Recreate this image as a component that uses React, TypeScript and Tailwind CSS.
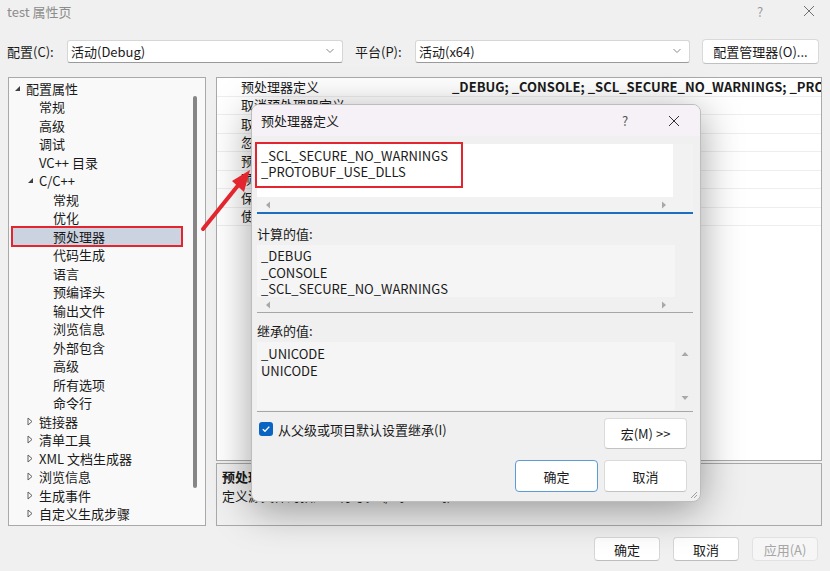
import React from "react";

type Node = { label: string; level: number; tri?: "open" | "closed"; selected?: boolean };

const tree: Node[] = [
  { label: "配置属性", level: 0, tri: "open" },
  { label: "常规", level: 1 },
  { label: "高级", level: 1 },
  { label: "调试", level: 1 },
  { label: "VC++ 目录", level: 1 },
  { label: "C/C++", level: 1, tri: "open" },
  { label: "常规", level: 2 },
  { label: "优化", level: 2 },
  { label: "预处理器", level: 2, selected: true },
  { label: "代码生成", level: 2 },
  { label: "语言", level: 2 },
  { label: "预编译头", level: 2 },
  { label: "输出文件", level: 2 },
  { label: "浏览信息", level: 2 },
  { label: "外部包含", level: 2 },
  { label: "高级", level: 2 },
  { label: "所有选项", level: 2 },
  { label: "命令行", level: 2 },
  { label: "链接器", level: 1, tri: "closed" },
  { label: "清单工具", level: 1, tri: "closed" },
  { label: "XML 文档生成器", level: 1, tri: "closed" },
  { label: "浏览信息", level: 1, tri: "closed" },
  { label: "生成事件", level: 1, tri: "closed" },
  { label: "自定义生成步骤", level: 1, tri: "closed" },
];

const props = [
  "预处理器定义",
  "取消预处理器定义",
  "取消所有预处理器定义",
  "忽略标准包含路径",
  "预处理到文件",
  "预处理取消显示行号",
  "保留注释",
  "使用标准符合性预处理器",
];

function Tri({ kind }: { kind?: "open" | "closed" }) {
  if (kind === "open")
    return (
      <svg width="7" height="7" viewBox="0 0 7 7">
        <path d="M6 1 L6 6 L1 6 Z" fill="#404040" />
      </svg>
    );
  if (kind === "closed")
    return (
      <svg width="6" height="9" viewBox="0 0 6 9">
        <path d="M1 1 L5 4.5 L1 8 Z" fill="none" stroke="#606060" strokeWidth="1" />
      </svg>
    );
  return null;
}

function Chevron() {
  return (
    <svg width="10" height="6" viewBox="0 0 10 6">
      <path d="M1.5 1 L5 4.5 L8.5 1" fill="none" stroke="#8a8a8a" strokeWidth="1" />
    </svg>
  );
}

function ArrowL() {
  return (
    <svg width="6" height="8" viewBox="0 0 6 8">
      <path d="M5 0.5 L1 4 L5 7.5 Z" fill="#a8a8a8" />
    </svg>
  );
}
function ArrowR() {
  return (
    <svg width="6" height="8" viewBox="0 0 6 8">
      <path d="M1 0.5 L5 4 L1 7.5 Z" fill="#a8a8a8" />
    </svg>
  );
}
function ArrowU() {
  return (
    <svg width="8" height="6" viewBox="0 0 8 6">
      <path d="M0.5 5 L4 1 L7.5 5 Z" fill="#a8a8a8" />
    </svg>
  );
}
function ArrowD() {
  return (
    <svg width="8" height="6" viewBox="0 0 8 6">
      <path d="M0.5 1 L4 5 L7.5 1 Z" fill="#a8a8a8" />
    </svg>
  );
}

function XIcon({ size = 12, color = "#555" }: { size?: number; color?: string }) {
  return (
    <svg width={size} height={size} viewBox="0 0 12 12">
      <path d="M1 1 L11 11 M11 1 L1 11" stroke={color} strokeWidth="1" fill="none" />
    </svg>
  );
}

export default function App() {
  const padFor = (lvl: number) => (lvl === 0 ? "pl-[5px]" : lvl === 1 ? "pl-[18px]" : "pl-[32px]");
  return (
    <div className="relative w-[830px] h-[571px] overflow-hidden bg-[#f0f0f0] text-[13px] text-[#1a1a1a] font-['Noto_Sans_CJK_SC',sans-serif] leading-none">
      {/* Title bar */}
      <div className="h-[22px] flex items-center pl-[7px]">
        <span className="text-[#8c8c8c] text-[13px]">test 属性页</span>
        <span className="ml-auto text-[#9a9a9a] text-[13px] w-[12px]">?</span>
        <span className="ml-[34px] mr-[15px] flex items-center">
          <XIcon size={12} color="#707070" />
        </span>
      </div>

      {/* Config row */}
      <div className="mt-[16px] h-[26px] flex items-center pl-[7px]">
        <span className="w-[60px] shrink-0">配置(C):</span>
        <div className="w-[276px] shrink-0 h-[23px] bg-white border border-[#d6d6d6] border-b-[#9a9a9a] rounded-[3px] flex items-center pl-[3px] pr-[7px]">
          <span>活动(Debug)</span>
          <span className="ml-auto"><Chevron /></span>
        </div>
        <span className="ml-[12px] w-[60px] shrink-0">平台(P):</span>
        <div className="w-[275px] shrink-0 h-[23px] bg-white border border-[#d6d6d6] border-b-[#9a9a9a] rounded-[3px] flex items-center pl-[3px] pr-[7px]">
          <span>活动(x64)</span>
          <span className="ml-auto"><Chevron /></span>
        </div>
        <div className="ml-[12px] w-[117px] shrink-0 h-[25px] bg-white border border-[#d9d9d9] border-b-[#c0c0c0] rounded-[4px] flex items-center justify-center">
          配置管理器(O)...
        </div>
      </div>

      {/* Main */}
      <div className="mt-[13px] h-[449px] flex px-[8px] gap-[10px]">
        {/* Tree */}
        <div className="w-[198px] shrink-0 border border-[#a9a9a9] bg-[#f9f9f9] flex">
          <div className="flex-1 pt-[1px]">
            {tree.map((n, i) => (
              <div key={i} className={`relative h-[18.5px] flex items-center ${padFor(n.level)}`}>
                {n.selected && (
                  <div className="absolute left-[2px] top-[-1px] w-[172px] h-[21px] bg-[#cbd2e0] border-2 border-[#e2252e]" />
                )}
                <span className="relative w-[12px] flex items-center">
                  <Tri kind={n.tri} />
                </span>
                <span className="relative whitespace-nowrap">{n.label}</span>
              </div>
            ))}
          </div>
          <div className="w-[13px] pt-[18px] pl-[1px]">
            <div className="w-[4px] h-[392px] bg-[#868686] rounded-[2px]" />
          </div>
        </div>

        {/* Right */}
        <div className="flex-1 min-w-0 flex flex-col gap-[2px]">
          <div className="h-[384px] border border-[#a9a9a9] bg-white">
            {props.map((p, i) => (
              <div key={i} className="h-[18.5px] flex items-center border-b border-[#eeeeee]">
                <div className="w-[232px] shrink-0 pl-[24px] whitespace-nowrap overflow-hidden leading-[18px]">{p}</div>
                <div className="flex-1 min-w-0 pl-[3px] whitespace-nowrap overflow-hidden font-bold leading-[18px]">
                  {i === 0 ? "_DEBUG; _CONSOLE; _SCL_SECURE_NO_WARNINGS; _PROTOBUF_USE_DLLS; %(PreprocessorDefinitions)" : ""}
                </div>
              </div>
            ))}
          </div>
          <div className="flex-1 border border-[#a9a9a9] bg-[#f0f0f0] pl-[5px] pt-[6px] flex flex-col gap-[6px]">
            <span className="font-bold">预处理器定义</span>
            <span>定义源文件的预处理符号。 (/D[macro])</span>
          </div>
        </div>
      </div>

      {/* Bottom buttons */}
      <div className="mt-[11px] flex justify-end pr-[12px] gap-[13px]">
        <div className="w-[66px] h-[24px] bg-white border border-[#d6d6d6] border-b-[#bdbdbd] rounded-[4px] flex items-center justify-center">确定</div>
        <div className="w-[66px] h-[24px] bg-white border border-[#d6d6d6] border-b-[#bdbdbd] rounded-[4px] flex items-center justify-center">取消</div>
        <div className="w-[66px] h-[24px] bg-[#f6f6f6] border border-[#e2e2e2] rounded-[4px] flex items-center justify-center text-[#a6a6a6]">应用(A)</div>
      </div>

      {/* Dialog */}
      <div className="absolute left-[251px] top-[104px] w-[450px] h-[398px] rounded-[8px] border border-[#bdbdbd] bg-[#f0f0f0] shadow-[0_8px_40px_rgba(0,0,0,0.38)] overflow-hidden flex flex-col">
        <div className="h-[31px] bg-[#f5f1f6] flex items-center pl-[9px]">
          <span>预处理器定义</span>
          <span className="ml-auto text-[#555] text-[13px] w-[10px]">?</span>
          <span className="ml-[36px] mr-[20px] flex items-center">
            <XIcon size={12} color="#333" />
          </span>
        </div>
        <div className="flex-1 flex flex-col pl-[5px] pr-[9px]">
          {/* Edit */}
          <div className="mt-[8px] w-[436px]">
            <div className="h-[53px] flex">
              <div className="relative w-[416px] bg-white pl-[4px] pt-[4px] leading-[16px]">
                <div>_SCL_SECURE_NO_WARNINGS</div>
                <div>_PROTOBUF_USE_DLLS</div>
                <div className="absolute left-[-2px] top-[-2px] w-[208px] h-[46px] border-2 border-[#e2252e]" />
              </div>
              <div className="flex-1 bg-[#f2f2f2]" />
            </div>
            <div className="h-[15px] flex items-center pl-[8px] pr-[26px] bg-[#f2f2f2]">
              <ArrowL />
              <span className="ml-auto"><ArrowR /></span>
            </div>
            <div className="h-[2px] bg-[#1d6ec2]" />
          </div>

          <div className="mt-[9px] h-[20px] flex items-center">计算的值:</div>
          <div className="mt-[2px] w-[436px]">
            <div className="h-[52px] flex">
              <div className="w-[418px] bg-[#f5f5f5] pl-[4px] pt-[3px] leading-[16.5px] overflow-hidden">
                <div>_DEBUG</div>
                <div>_CONSOLE</div>
                <div>_SCL_SECURE_NO_WARNINGS</div>
              </div>
              <div className="flex-1" />
            </div>
            <div className="h-[15px] flex items-center pl-[8px] pr-[26px]">
              <ArrowL />
              <span className="ml-auto"><ArrowR /></span>
            </div>
            <div className="h-[1px] bg-[#a6a6a6]" />
          </div>

          <div className="mt-[7px] h-[20px] flex items-center">继承的值:</div>
          <div className="mt-[2px] w-[436px]">
            <div className="h-[68px] flex">
              <div className="w-[418px] bg-[#f5f5f5] pl-[4px] pt-[3px] leading-[17px]">
                <div>_UNICODE</div>
                <div>UNICODE</div>
              </div>
              <div className="flex-1 flex flex-col items-center justify-between py-[9px] pl-[2px]">
                <ArrowU />
                <ArrowD />
              </div>
            </div>
            <div className="mt-[1px] h-[1px] bg-[#a6a6a6]" />
          </div>

          <div className="mt-[6px] flex justify-between">
            <div className="flex items-center gap-[5px] pl-[2px] pt-[4px] h-[18px]">
              <div className="w-[14px] h-[14px] rounded-[3px] bg-[#0a64c2] flex items-center justify-center">
                <svg width="10" height="10" viewBox="0 0 10 10">
                  <path d="M1.8 5.2 L4 7.3 L8.3 2.6" fill="none" stroke="white" strokeWidth="1.4" />
                </svg>
              </div>
              <span>从父级或项目默认设置继承(I)</span>
            </div>
            <div className="mr-[4px] w-[83px] h-[31px] bg-white border border-[#dadada] border-b-[#c2c2c2] rounded-[4px] flex items-center justify-center">
              宏(M) &gt;&gt;
            </div>
          </div>
          <div className="mt-[11px] flex justify-end gap-[6px] mr-[4px]">
            <div className="w-[83px] h-[32px] bg-white border border-[#5b9bd8] rounded-[4px] flex items-center justify-center">确定</div>
            <div className="w-[83px] h-[32px] bg-white border border-[#dadada] border-b-[#c2c2c2] rounded-[4px] flex items-center justify-center">取消</div>
          </div>
        </div>
        <svg className="absolute right-[2px] bottom-[2px]" width="8" height="8" viewBox="0 0 8 8">
          <path d="M7 1 L1 7 M7 4 L4 7" stroke="#a0a0a0" strokeWidth="1" />
        </svg>
      </div>

      {/* Red annotation arrow */}
      <svg className="absolute left-0 top-0 pointer-events-none" width="830" height="571" viewBox="0 0 830 571">
        <path d="M203 229 L240 183" stroke="#e2252e" strokeWidth="4" strokeLinecap="round" fill="none" />
        <path d="M250 170 L232 181 L244 192 Z" fill="#e2252e" />
      </svg>
    </div>
  );
}
